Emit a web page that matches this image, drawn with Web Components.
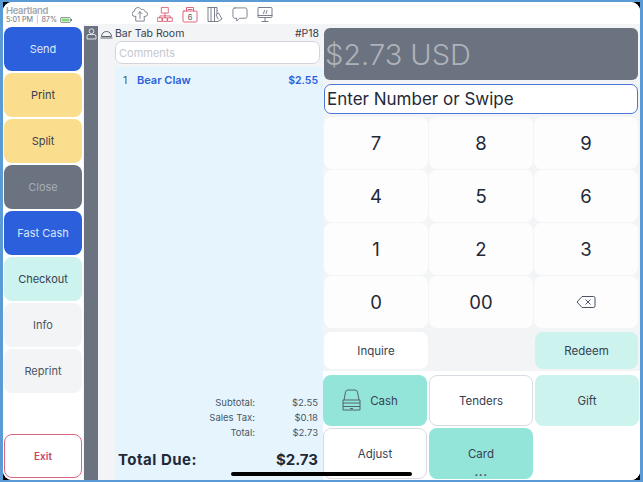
<!DOCTYPE html>
<html><head><meta charset="utf-8">
<style>
html,body{margin:0;padding:0;width:643px;height:482px;overflow:hidden;background:#000}
body{font-family:Inter,"Liberation Sans",sans-serif;color:#1f2937}
</style></head>
<body>
<template id="t-btn"><style>
:host{display:flex;align-items:center;justify-content:center;gap:9px;box-sizing:border-box;border-radius:8px;font-size:11px;color:#374151;background:#fff;position:relative;min-width:0;min-height:0}
:host([v=blue]){background:#2b5fdb;color:#dbe7fb}
:host([v=yellow]){background:#fbdd8e;color:#374151}
:host([v=gray]){background:#6b7280;color:#a8adb5}
:host([v=mint]){background:#ccf3ee;color:#374151}
:host([v=teal]){background:#93e5da;color:#374151}
:host([v=light]){background:#f3f4f6;color:#4b5563}
:host([v=exit]){background:#fff;border:1.5px solid #d9667f;color:#c9445f;font-weight:600;font-size:10px}
:host([v=line]){background:#fff;border:1px solid #d8dce2;color:#374151}
:host([v=key]){font-size:18.5px;font-weight:400;color:#1f2937;background:#fdfdfe}
:host([v=blank]){background:transparent}
:host([big]){font-size:11.5px}
:host([shift]){padding-right:10px}
</style><slot></slot></template>
<template id="t-top"><style>
:host{display:flex;height:22px;box-sizing:border-box;background:#fff;position:relative}
.st{width:125px;padding:3px 0 0 3px;box-sizing:border-box;color:#a3a8b0;flex:none}
.h{font-size:9.500px;font-weight:600;line-height:11px;letter-spacing:-.35px}
.s{font-size:7.200px;line-height:8px;color:#6b7280;display:flex;align-items:center;gap:3px;white-space:nowrap}
.ic{display:flex;gap:9px;align-items:flex-start;height:22px;padding:4px 0 0 4px;box-sizing:border-box}
svg{display:block;fill:none;stroke-linecap:round;stroke-linejoin:round}
</style>
<div class="st"><div class="h">Heartland</div><div class="s"><span>5:01 PM</span><span style="color:#7ab8e6">|</span><span>87%</span>
<svg width="12" height="6" viewBox="0 0 12 6"><rect x=".5" y=".5" width="10" height="5" rx="1" stroke="#6b7280" stroke-width=".7"/><rect x="1.500" y="1.500" width="8" height="3" fill="#86d97a"/><rect x="11" y="2" width="1" height="2" fill="#6b7280"/></svg></div></div>
<div class="ic">
<svg width="16" height="17" viewBox="0 0 17 17" stroke="#6b7280" stroke-width=".9"><path d="M4 10.500H3a2.700 2.700 0 0 1-.4-5.400A3.800 3.800 0 0 1 9.800 3.200 3.200 3.200 0 0 1 14 5.500a2.500 2.500 0 0 1 0 5h-1"/><path d="M8.500 13V5.500M6.300 7.700l2.200-2.200 2.200 2.200"/><path d="M4 11v4.500h9V11"/></svg>
<svg width="16" height="17" viewBox="0 0 17 17" stroke="#d9566f" stroke-width=".9"><rect x="5" y="1" width="7" height="6"/><path d="M8.500 7v3M3 12v-2h11v2M8.500 10v2"/><rect x=".7" y="12" width="4.600" height="3.800"/><rect x="6.200" y="12" width="4.600" height="3.800"/><rect x="11.700" y="12" width="4.600" height="3.800"/></svg>
<svg width="16" height="17" viewBox="0 0 16 17" stroke="#d9566f" stroke-width=".9"><rect x="1" y="5" width="14" height="11" rx="1"/><path d="M4.500 5V1.500h7V5M6 3.500h4"/><text x="8" y="14" font-size="7.500" text-anchor="middle" fill="#4b5563" stroke="none" font-family="Inter,sans-serif">6</text></svg>
<svg width="16" height="17" viewBox="0 0 16 17" stroke="#6b7280" stroke-width=".9"><path d="M1 1.500h9v3M1 1.500v14h6.500v-14M4 1.500v14M7.500 15.500h3.500l4-2.500-3.500-6-2.500 1.500 2 4.500M10 4.500v3"/></svg>
<svg width="16" height="17" viewBox="0 0 17 17" stroke="#6b7280" stroke-width=".9"><path d="M3 1.500h11a2 2 0 0 1 2 2v7a2 2 0 0 1-2 2H8l-3 3v-3H3a2 2 0 0 1-2-2v-7a2 2 0 0 1 2-2z"/></svg>
<svg width="16" height="17" viewBox="0 0 16 17" stroke="#6b7280" stroke-width=".9"><rect x="1" y="1.500" width="14" height="10" rx="1"/><path d="M1 9.500h14M8 11.500v4M5 15.500h6M6.500 7.500l1-3M9 7.500l1-3"/></svg>
</div></template>
<template id="t-left"><style>
:host{display:flex;flex-direction:column;width:80px;flex:none;box-sizing:border-box;padding:3px 1px 2px 1px;gap:2px;background:#fff}
::slotted(pos-btn){height:44px;flex:none}
::slotted(.sp){flex:1}
</style><slot></slot></template>
<template id="t-ticket"><style>
:host{display:flex;width:240px;flex:none;box-sizing:border-box;background:#f3f4f6}
.strip{width:14px;background:#6b7280;flex:none;display:flex;justify-content:center;padding-top:2px;box-sizing:border-box;margin:2px 0 0 1px}
.gut{width:17px;flex:none;padding-top:6px;padding-left:2px;box-sizing:border-box}
.main{flex:1;display:flex;flex-direction:column;min-width:0}
.hd{display:flex;justify-content:space-between;height:17px;align-items:center;font-size:10.500px;color:#374151;padding:1px 4px 0 0;box-sizing:border-box}
.cm{height:23px;margin:0 3px 0 0;box-sizing:border-box;border:1px solid #d1d5db;border-radius:7px;background:#fff;color:#c4c8ce;font-size:11px;display:flex;align-items:center;padding-left:3px}
.ls{flex:1;background:#e6f5fd;display:flex;flex-direction:column;padding:6px 5px 0 8px;margin-top:3px}
.row{display:flex;height:14px;align-items:center}
.n{width:14px;color:#4b5563;font-size:10.500px}
.nm{flex:1;color:#2b5fdb;font-weight:600;font-size:11px}
.pr{color:#2b5fdb;font-weight:600;font-size:10.500px}
.tot{margin-top:auto;display:grid;grid-template-columns:1fr 63px;font-size:9.500px;color:#4b5563;line-height:15px;text-align:right;padding-bottom:3px}
.due{display:flex;justify-content:space-between;font-size:15px;font-weight:700;color:#1f2937;height:37px;align-items:center;margin-left:-5px;padding-bottom:5px;box-sizing:border-box}
.due span:first-child{letter-spacing:.5px}
svg{display:block;fill:none}
</style>
<div class="strip"><svg width="11" height="12" viewBox="0 0 11 12" stroke="#eef0f2" stroke-width=".9"><circle cx="5.500" cy="3.200" r="2.400"/><path d="M1 11V8.500a2 2 0 0 1 2-2h5a2 2 0 0 1 2 2V11z"/></svg></div>
<div class="gut"><svg width="13" height="9" viewBox="0 0 13 9" stroke="#4b5563" stroke-width=".9"><path d="M1.500 6.500a5 5 0 0 1 10 0zM.5 8h12"/></svg></div>
<div class="main"><div class="hd"><span>Bar Tab Room</span><span>#P18</span></div><div class="cm">Comments</div>
<div class="ls"><div class="row"><span class="n">1</span><span class="nm">Bear Claw</span><span class="pr">$2.55</span></div>
<div class="tot"><span>Subtotal:</span><span>$2.55</span><span>Sales Tax:</span><span>$0.18</span><span>Total:</span><span>$2.73</span></div>
<div class="due"><span>Total Due:</span><span>$2.73</span></div></div></div></template>
<template id="t-pay"><style>
:host{display:flex;flex-direction:column;flex:1;min-width:0;background:#f3f4f6;box-sizing:border-box}
.up{padding:4px 2px 0 1px;display:flex;flex-direction:column}
.disp{height:52px;background:#6b7280;border-radius:6px;color:#aeb2b9;font-size:29px;font-weight:300;display:flex;align-items:center;padding-left:1px;box-sizing:border-box}
.in{height:30px;margin-top:4px;border:1px solid #4a76d8;border-radius:7px;background:#fff;font-size:17px;color:#1f2937;display:flex;align-items:center;padding-left:2px;box-sizing:border-box}
.keys{display:grid;grid-template-columns:repeat(3,104px);grid-auto-rows:52px;gap:1px;margin-top:3px}
.aux{display:grid;grid-template-columns:104px 105px 103px;height:37px;gap:1px;margin:4px 0 0}
.low{background:#fff;flex:1;display:grid;grid-template-columns:repeat(3,104px);grid-template-rows:51px 51px;gap:2px;padding:4px 0 0 0;margin-top:2px;align-content:start}
.dots{position:absolute;left:0;right:0;bottom:4px;text-align:center;font-size:12px;line-height:6px;font-weight:600;letter-spacing:.5px;color:#374151}
svg{display:block;fill:none}
.dr{margin-top:-1px}
</style><div class="up"><div class="disp">$2.73 USD</div><div class="in">Enter Number or Swipe</div>
<div class="keys"><pos-btn v="key">7</pos-btn><pos-btn v="key">8</pos-btn><pos-btn v="key">9</pos-btn><pos-btn v="key">4</pos-btn><pos-btn v="key">5</pos-btn><pos-btn v="key">6</pos-btn><pos-btn v="key">1</pos-btn><pos-btn v="key">2</pos-btn><pos-btn v="key">3</pos-btn><pos-btn v="key">0</pos-btn><pos-btn v="key">00</pos-btn><pos-btn v="key"><svg width="20" height="14" viewBox="0 0 20 14" stroke="#4b5563" stroke-width="1"><path d="M6 1.500h11.500a1.500 1.500 0 0 1 1.500 1.500v8a1.500 1.500 0 0 1-1.500 1.500H6L1 7z"/><path d="M9.500 4.500l5 5M14.500 4.500l-5 5"/></svg></pos-btn></div>
<div class="aux"><pos-btn big>Inquire</pos-btn><pos-btn v="blank"></pos-btn><pos-btn v="mint" big>Redeem</pos-btn></div></div>
<div class="low"><pos-btn v="teal" big shift><svg class="dr" width="19" height="22" viewBox="0 0 19 22" stroke="#4b5563" stroke-width=".9"><path d="M2 11L3.500 3a2.500 2.500 0 0 1 2.500-2h7a2.500 2.500 0 0 1 2.500 2L17 11"/><path d="M1 11h17v3H1zM1 14v7h17v-7M1 17.500h17M8 19.500h3"/></svg><span>Cash</span></pos-btn><pos-btn v="line" big>Tenders</pos-btn><pos-btn v="mint" big>Gift</pos-btn><pos-btn v="line" big>Adjust</pos-btn><pos-btn v="teal" big>Card<span class="dots">...</span></pos-btn></div></template>
<template id="t-app"><style>
:host{display:block;width:643px;height:482px;box-sizing:border-box;background:#5b9bd5;position:relative}
.scr{width:637px;height:478px;background:#fff;border-radius:9px;overflow:hidden;display:flex;flex-direction:column}
.body{flex:1;display:flex;min-height:0}
.home{position:absolute;left:231px;top:472px;width:181px;height:4px;border-radius:2px;background:#000}
.corner{position:absolute;width:10px;height:10px;background:#000}
.inner{position:absolute;left:3px;top:2px;width:637px;height:478px}
</style><div class="corner" style="left:3px;top:2px"></div><div class="corner" style="right:3px;top:2px"></div><div class="corner" style="left:3px;bottom:2px"></div><div class="corner" style="right:3px;bottom:2px"></div>
<div class="inner"><div class="scr"><pos-top></pos-top><div class="body"><pos-left>
<pos-btn v="blue">Send</pos-btn><pos-btn v="yellow">Print</pos-btn><pos-btn v="yellow">Split</pos-btn><pos-btn v="gray">Close</pos-btn><pos-btn v="blue">Fast Cash</pos-btn><pos-btn v="mint">Checkout</pos-btn><pos-btn v="light">Info</pos-btn><pos-btn v="light">Reprint</pos-btn><div class="sp"></div><pos-btn v="exit">Exit</pos-btn></pos-left><pos-ticket></pos-ticket><pos-pay></pos-pay></div></div></div><div class="home"></div></template>
<pos-app></pos-app>
<script>
function def(tag,id){customElements.define(tag,class extends HTMLElement{constructor(){super();this.attachShadow({mode:"open"}).appendChild(document.getElementById(id).content.cloneNode(true));}});}
def("pos-btn","t-btn");def("pos-top","t-top");def("pos-left","t-left");def("pos-ticket","t-ticket");def("pos-pay","t-pay");def("pos-app","t-app");
</script>
</body></html>
